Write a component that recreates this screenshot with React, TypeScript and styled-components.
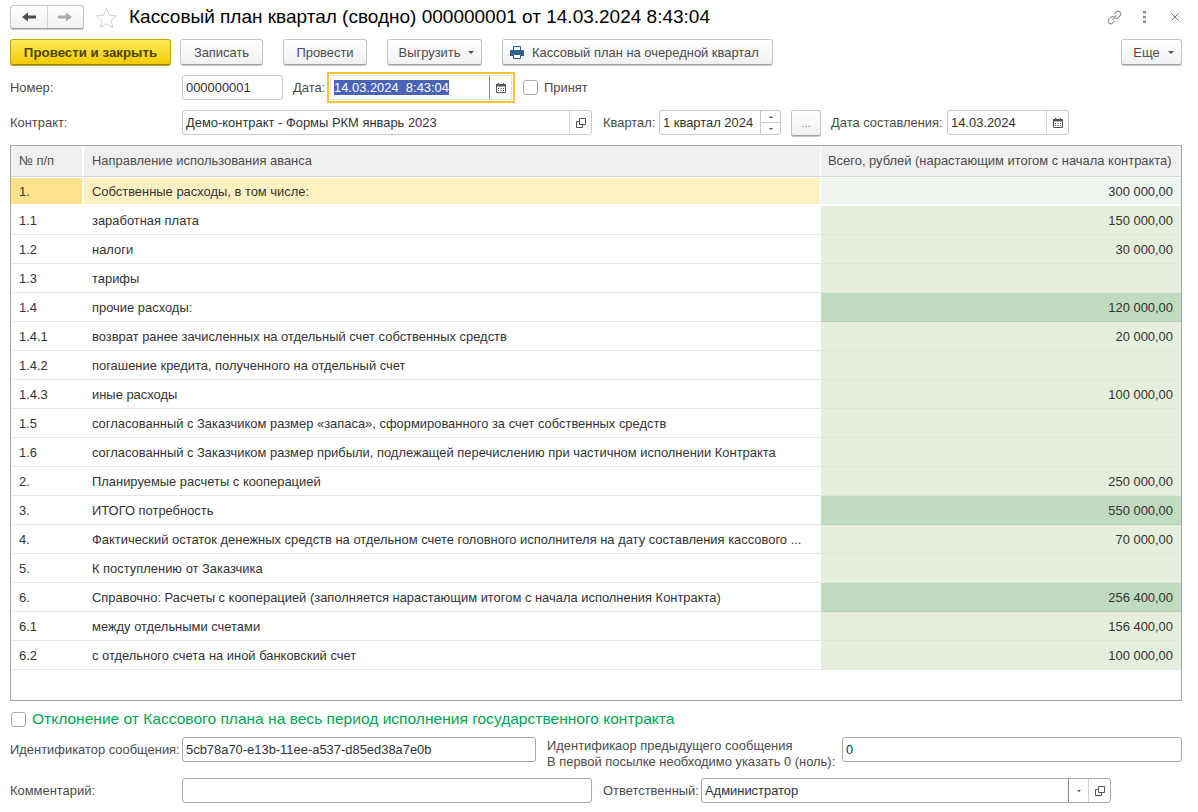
import React from "react";
import styled, { createGlobalStyle } from "styled-components";

const Global = createGlobalStyle`
  html, body { margin: 0; padding: 0; background: #fff; width: 1198px; height: 812px; overflow: hidden; }
  body { font-family: "Liberation Sans", Arial, sans-serif; font-size: 12.93px; color: #4b4b4b; }
  * { box-sizing: border-box; }
`;

const Page = styled.div`
  width: 1198px;
  height: 812px;
  padding: 5px 16px 0 10px;
  display: flex;
  flex-direction: column;
`;

const TitleRow = styled.div`
  height: 24px;
  display: flex;
  align-items: center;
`;
const NavGroup = styled.div`
  width: 74px;
  height: 24px;
  display: flex;
  border: 1px solid #c4c4c4;
  border-bottom-color: #a0a0a0;
  border-radius: 3px;
  background: linear-gradient(#ffffff, #f0f0f0);
  box-shadow: 0 1px 0 #c8c8c8;
`;
const NavCell = styled.div<{ $divider?: boolean }>`
  flex: 1;
  display: flex;
  align-items: center;
  justify-content: center;
  border-left: ${(p) => (p.$divider ? "1px solid #d4d4d4" : "none")};
`;
const StarWrap = styled.div`
  width: 23px;
  height: 22px;
  margin-left: 11px;
  margin-top: 2px;
`;
const Title = styled.h1`
  margin: 0 0 0 11px;
  flex: 1;
  font-size: 19px;
  font-weight: 400;
  line-height: 24px;
  color: #000;
  white-space: nowrap;
`;
const TitleIcons = styled.div`
  display: flex;
  align-items: center;
  margin-right: 3px;
`;
const DotsSlot = styled.div`
  display: flex;
  margin: 0 25px 0 20px;
`;

const Toolbar = styled.div`
  height: 26px;
  margin-top: 10px;
  display: flex;
  align-items: stretch;
`;
const Button = styled.div<{ $w: number; $ml?: number; $primary?: boolean; $pl?: number }>`
  width: ${(p) => p.$w}px;
  margin-left: ${(p) => p.$ml ?? 0}px;
  padding-left: ${(p) => p.$pl ?? 0}px;
  display: flex;
  align-items: center;
  justify-content: center;
  gap: 5px;
  white-space: nowrap;
  border-radius: 3px;
  border: 1px solid ${(p) => (p.$primary ? "#c2a400" : "#c6c6c6")};
  border-bottom-color: ${(p) => (p.$primary ? "#a08600" : "#a3a3a3")};
  background: ${(p) =>
    p.$primary ? "linear-gradient(#ffec5c, #f3cb05)" : "linear-gradient(#ffffff, #f1f1f1)"};
  box-shadow: 0 1px 0 ${(p) => (p.$primary ? "#b9a320" : "#c8c8c8")};
  font-weight: ${(p) => (p.$primary ? 700 : 400)};
  font-size: ${(p) => (p.$primary ? "13.3px" : "inherit")};
  color: ${(p) => (p.$primary ? "#4f4200" : "#4b4b4b")};
`;
const PrintButton = styled(Button)`
  justify-content: flex-start;
  padding-left: 7px;
  gap: 8px;
`;
const Caret = styled.span`
  width: 0;
  height: 0;
  margin-left: 3px;
  border-left: 3px solid transparent;
  border-right: 3px solid transparent;
  border-top: 3px solid #555;
`;
const Spacer = styled.div`
  flex: 1;
`;

const FormRow = styled.div<{ $mt?: number }>`
  height: 25px;
  margin-top: ${(p) => p.$mt ?? 10}px;
  display: flex;
  align-items: center;
`;
const Label = styled.div<{ $w?: number; $ml?: number }>`
  ${(p) => (p.$w ? `width: ${p.$w}px;` : "")}
  margin-left: ${(p) => p.$ml ?? 0}px;
  white-space: nowrap;
  flex: none;
`;
const Field = styled.div<{ $w: number; $ml?: number; $focus?: boolean }>`
  width: ${(p) => p.$w}px;
  height: 25px;
  margin-left: ${(p) => p.$ml ?? 0}px;
  flex: none;
  display: flex;
  align-items: stretch;
  background: #fff;
  border: 1px solid #c9c9c9;
  border-radius: ${(p) => (p.$focus ? 0 : 3)}px;
  color: #333;
  ${(p) => (p.$focus ? "outline: 2px solid #f6c42c; outline-offset: 1px; border-color: #e4e4e4;" : "")}
`;
const FieldDark = styled(Field)`
  border-color: #a9a9a9;
`;
const FieldText = styled.div`
  flex: 1;
  min-width: 0;
  padding-left: 3px;
  display: flex;
  align-items: center;
  white-space: pre;
`;
const Selected = styled.span`
  background: #4a63b9;
  color: #fff;
  line-height: 15px;
  display: inline-block;
`;
const FieldBtn = styled.div<{ $w?: number; $strong?: boolean }>`
  width: ${(p) => p.$w ?? 22}px;
  flex: none;
  display: flex;
  align-items: center;
  justify-content: center;
  border-left: 1px solid ${(p) => (p.$strong ? "#8c8c8c" : "#d2d2d2")};
`;
const Spin = styled.div`
  width: 20px;
  flex: none;
  border-left: 1px solid #c9c9c9;
  display: flex;
  flex-direction: column;
`;
const SpinCell = styled.div<{ $down?: boolean }>`
  flex: 1;
  display: flex;
  align-items: center;
  justify-content: center;
  border-top: ${(p) => (p.$down ? "1px solid #c9c9c9" : "none")};
`;
const Tri = styled.span<{ $up?: boolean }>`
  width: 0;
  height: 0;
  border-left: 2.5px solid transparent;
  border-right: 2.5px solid transparent;
  ${(p) => (p.$up ? "border-bottom: 2.5px solid #555;" : "border-top: 2.5px solid #555;")}
`;
const DotsButton = styled(Button)`
  height: 26px;
  color: #777;
  font-size: 11px;
  align-items: flex-end;
  padding-bottom: 6px;
`;
const Check = styled.span<{ $ml?: number }>`
  width: 15px;
  height: 15px;
  flex: none;
  margin-left: ${(p) => p.$ml ?? 0}px;
  border: 1px solid #a8a8a8;
  border-radius: 3px;
  background: #fff;
`;

const Table = styled.div`
  height: 556px;
  margin-top: 10px;
  border: 1px solid #a6a6a6;
  flex: none;
  color: #333;
`;
const HeadRow = styled.div`
  height: 31px;
  display: grid;
  grid-template-columns: 73px 737px 1fr;
`;
const HeadCell = styled.div<{ $sep?: number; $pl?: number }>`
  background: #f0f0f0;
  color: #4b4b4b;
  border-right: ${(p) => p.$sep ?? 0}px solid #fff;
  border-bottom: 1px solid #d6d6d6;
  padding: 0 0 2px ${(p) => p.$pl ?? 8}px;
  display: flex;
  align-items: center;
  white-space: nowrap;
`;
const Row = styled.div`
  height: 29px;
  display: grid;
  grid-template-columns: 73px 737px 1fr;
`;
const Cell = styled.div<{ $bg?: string; $line?: string; $sep?: number; $current?: boolean }>`
  padding: 1px 8px 0 8px;
  display: flex;
  align-items: center;
  background: ${(p) => p.$bg ?? "#fff"};
  background-clip: padding-box;
  border-bottom: ${(p) => (p.$current ? 2 : 1)}px solid ${(p) => p.$line ?? "#e6e6e6"};
  border-top: ${(p) => (p.$current ? "1px solid #fff" : "none")};
  border-right: ${(p) => p.$sep ?? 0}px solid #fff;
  overflow: hidden;
  white-space: nowrap;
`;
const Amount = styled(Cell)`
  justify-content: flex-end;
`;

const Deviation = styled.div`
  height: 16px;
  margin-top: 10px;
  display: flex;
  align-items: center;
`;
const DeviationText = styled.span`
  margin-left: 6px;
  font-size: 15.55px;
  line-height: 16px;
  color: #00a651;
  white-space: nowrap;
`;
const TwoLine = styled.div`
  margin-left: 11px;
  width: 295px;
  flex: none;
  line-height: 16px;
  white-space: nowrap;
  padding-top: 8px;
`;

const Cal = () => (
  <svg width="10" height="10" viewBox="0 0 10 10">
    <path d="M0.5 1.5h9v8h-9z" fill="#fff" stroke="#555" />
    <path d="M0 1h10v2.5H0z" fill="#555" />
    <path d="M2 0h1v2H2zM7 0h1v2H7z" fill="#555" />
    <path d="M2 5h1v1H2zM4.5 5h1v1h-1zM7 5h1v1H7zM2 7h1v1H2zM4.5 7h1v1h-1zM7 7h1v1H7z" fill="#555" />
  </svg>
);
const OpenIcon = () => (
  <svg width="10" height="10" viewBox="0 0 10 10" fill="none" stroke="#555">
    <path d="M3.5 0.5h6v6h-6z" />
    <path d="M3.5 3.5h-3v6h6v-3" />
  </svg>
);
const Printer = () => (
  <svg width="14" height="13" viewBox="0 0 14 13">
    <path d="M3.5 0.5h7v4h-7z" fill="#fff" stroke="#2f6088" />
    <path d="M1 4h12a1 1 0 0 1 1 1v5h-3V8H3v2H0V5a1 1 0 0 1 1-1z" fill="#2f6088" />
    <path d="M3.5 8.5h7v4h-7z" fill="#fff" stroke="#2f6088" />
  </svg>
);
const Arrow = ({ dir, color }: { dir: "l" | "r"; color: string }) => (
  <svg width="14" height="10" viewBox="0 0 14 10" fill={color}>
    <path d={dir === "l" ? "M0 5 6 0.5v3h8v3H6v3z" : "M14 5 8 0.5v3H0v3h8v3z"} />
  </svg>
);
const Star = () => (
  <svg width="23" height="22" viewBox="0 0 22 22" fill="none" stroke="#cfcfcf">
    <path d="M11 1.5l2.9 6.6 7.1.7-5.4 4.7 1.6 7-6.2-3.7-6.2 3.7 1.6-7L1 8.8l7.1-.7z" />
  </svg>
);
const LinkIcon = () => (
  <svg width="17" height="17" viewBox="0 0 16 16" fill="none" stroke="#8c8c8c" strokeWidth="1">
    <path d="M6 10l4-4" />
    <path d="M8 4.5l2-2a2.6 2.6 0 0 1 3.6 3.6l-2 2a2.6 2.6 0 0 1-3.4.2" />
    <path d="M8 11.5l-2 2a2.6 2.6 0 0 1-3.6-3.6l2-2a2.6 2.6 0 0 1 3.4-.2" />
  </svg>
);
const DotsIcon = () => (
  <svg width="3" height="12" viewBox="0 0 3 12" fill="#8c8c8c">
    <rect x="0" y="0" width="3" height="2.4" />
    <rect x="0" y="4.8" width="3" height="2.4" />
    <rect x="0" y="9.6" width="3" height="2.4" />
  </svg>
);
const CloseIcon = () => (
  <svg width="8" height="8" viewBox="0 0 8 8" stroke="#777" fill="none">
    <path d="M0.5 0.5l7 7M7.5 0.5l-7 7" />
  </svg>
);

const GREEN_L = "#e6efdd";
const GREEN_D = "#bfdbc0";
type R = { n: string; t: string; a?: string; dark?: boolean };
const rows: R[] = [
  { n: "1.1", t: "заработная плата", a: "150 000,00" },
  { n: "1.2", t: "налоги", a: "30 000,00" },
  { n: "1.3", t: "тарифы" },
  { n: "1.4", t: "прочие расходы:", a: "120 000,00", dark: true },
  { n: "1.4.1", t: "возврат ранее зачисленных на отдельный счет собственных средств", a: "20 000,00" },
  { n: "1.4.2", t: "погашение кредита, полученного на отдельный счет" },
  { n: "1.4.3", t: "иные расходы", a: "100 000,00" },
  { n: "1.5", t: "согласованный с Заказчиком размер «запаса», сформированного за счет собственных средств" },
  { n: "1.6", t: "согласованный с Заказчиком размер прибыли, подлежащей перечислению при частичном исполнении Контракта" },
  { n: "2.", t: "Планируемые расчеты с кооперацией", a: "250 000,00" },
  { n: "3.", t: "ИТОГО потребность", a: "550 000,00", dark: true },
  { n: "4.", t: "Фактический остаток денежных средств на отдельном счете головного исполнителя на дату составления кассового ...", a: "70 000,00" },
  { n: "5.", t: "К поступлению от Заказчика" },
  { n: "6.", t: "Справочно: Расчеты с кооперацией (заполняется нарастающим итогом с начала исполнения Контракта)", a: "256 400,00", dark: true },
  { n: "6.1", t: "между отдельными счетами", a: "156 400,00" },
  { n: "6.2", t: "с отдельного счета на иной банковский счет", a: "100 000,00" },
];

export default function App() {
  return (
    <Page>
      <Global />
      <TitleRow>
        <NavGroup>
          <NavCell><Arrow dir="l" color="#4a4a4a" /></NavCell>
          <NavCell $divider><Arrow dir="r" color="#aaa" /></NavCell>
        </NavGroup>
        <StarWrap><Star /></StarWrap>
        <Title>Кассовый план квартал (сводно) 000000001 от 14.03.2024 8:43:04</Title>
        <TitleIcons>
          <LinkIcon />
          <DotsSlot><DotsIcon /></DotsSlot>
          <CloseIcon />
        </TitleIcons>
      </TitleRow>

      <Toolbar>
        <Button $primary $w={161}>Провести и закрыть</Button>
        <Button $w={83} $ml={9}>Записать</Button>
        <Button $w={84} $ml={20}>Провести</Button>
        <Button $w={95} $ml={20} $pl={4}>Выгрузить<Caret /></Button>
        <PrintButton $w={271} $ml={20}><Printer />Кассовый план на очередной квартал</PrintButton>
        <Spacer />
        <Button $w={61} $pl={4}>Еще<Caret /></Button>
      </Toolbar>

      <FormRow>
        <Label $w={172}>Номер:</Label>
        <Field $w={101}><FieldText>000000001</FieldText></Field>
        <Label $ml={10} $w={37}>Дата:</Label>
        <Field $w={182} $focus>
          <FieldText>
            <Selected>14.03.2024  8:43:04</Selected>
          </FieldText>
          <FieldBtn $strong><Cal /></FieldBtn>
        </Field>
        <Check $ml={11} />
        <Label $ml={6}>Принят</Label>
      </FormRow>

      <FormRow>
        <Label $w={172}>Контракт:</Label>
        <Field $w={410}>
          <FieldText>Демо-контракт - Формы РКМ январь 2023</FieldText>
          <FieldBtn><OpenIcon /></FieldBtn>
        </Field>
        <Label $ml={11} $w={56}>Квартал:</Label>
        <Field $w={122}>
          <FieldText>1 квартал 2024</FieldText>
          <Spin>
            <SpinCell><Tri $up /></SpinCell>
            <SpinCell $down><Tri /></SpinCell>
          </Spin>
        </Field>
        <DotsButton $w={30} $ml={10}>...</DotsButton>
        <Label $ml={10} $w={116}>Дата составления:</Label>
        <Field $w={122}>
          <FieldText>14.03.2024</FieldText>
          <FieldBtn><Cal /></FieldBtn>
        </Field>
      </FormRow>

      <Table>
        <HeadRow>
          <HeadCell $sep={2}>№ п/п</HeadCell>
          <HeadCell $sep={1}>Направление использования аванса</HeadCell>
          <HeadCell $pl={7}>Всего, рублей (нарастающим итогом с начала контракта)</HeadCell>
        </HeadRow>
        <Row>
          <Cell $current $bg="#ffe28a" $line="#fff" $sep={2}>1.</Cell>
          <Cell $current $bg="#fff1c2" $line="#fff" $sep={1}>Собственные расходы, в том числе:</Cell>
          <Amount $current $bg="#eef4ee" $line="#fff">300 000,00</Amount>
        </Row>
        {rows.map((r) => (
          <Row key={r.n}>
            <Cell>{r.n}</Cell>
            <Cell $sep={1}>{r.t}</Cell>
            <Amount $bg={r.dark ? GREEN_D : GREEN_L} $line={r.dark ? "#b4d2b5" : "#dfe8d6"}>{r.a ?? ""}</Amount>
          </Row>
        ))}
      </Table>

      <Deviation>
        <Check $ml={1} />
        <DeviationText>Отклонение от Кассового плана на весь период исполнения государственного контракта</DeviationText>
      </Deviation>

      <FormRow>
        <Label $w={172}>Идентификатор сообщения:</Label>
        <FieldDark $w={354}><FieldText>5cb78a70-e13b-11ee-a537-d85ed38a7e0b</FieldText></FieldDark>
        <TwoLine>
          Идентификаор предыдущего сообщения
          <br />
          В первой посылке необходимо указать 0 (ноль):
        </TwoLine>
        <FieldDark $w={340}><FieldText>0</FieldText></FieldDark>
      </FormRow>

      <FormRow $mt={16}>
        <Label $w={172}>Комментарий:</Label>
        <FieldDark $w={410}><FieldText /></FieldDark>
        <Label $ml={11} $w={98}>Ответственный:</Label>
        <FieldDark $w={410}>
          <FieldText>Администратор</FieldText>
          <FieldBtn $w={20} $strong><Tri /></FieldBtn>
          <FieldBtn $w={22}><OpenIcon /></FieldBtn>
        </FieldDark>
      </FormRow>
    </Page>
  );
}
